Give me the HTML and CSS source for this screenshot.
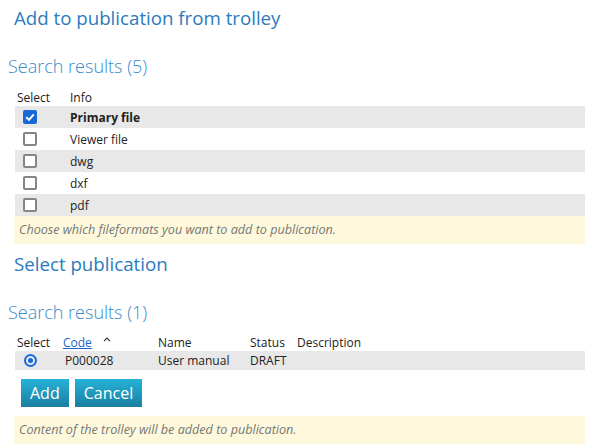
FILE: index.html
```html
<!DOCTYPE html>
<html lang="en">
<head>
  <meta charset="UTF-8">
  <title>Add to publication from trolley</title>
  <link rel="stylesheet" href="styles.css">
</head>
<body>

  <h1 class="page-title">Add to publication from trolley</h1>
  <h2 class="results-title">Search results (5)</h2>

  <div class="list files">
    <div class="row head">
      <div class="cell sel">Select</div>
      <div class="cell">Info</div>
    </div>
    <div class="row alt">
      <div class="cell sel"><span class="check on"><svg viewBox="0 0 14 14" width="14" height="14"><path d="M3.2 7.2 L6 9.8 L10.8 4.4" fill="none" stroke="#fff" stroke-width="2"/></svg></span></div>
      <div class="cell info strong">Primary file</div>
    </div>
    <div class="row">
      <div class="cell sel"><span class="check"></span></div>
      <div class="cell info">Viewer file</div>
    </div>
    <div class="row alt">
      <div class="cell sel"><span class="check"></span></div>
      <div class="cell info">dwg</div>
    </div>
    <div class="row">
      <div class="cell sel"><span class="check"></span></div>
      <div class="cell info">dxf</div>
    </div>
    <div class="row alt">
      <div class="cell sel"><span class="check"></span></div>
      <div class="cell info">pdf</div>
    </div>
  </div>
  <div class="hint">Choose which fileformats you want to add to publication.</div>

  <h1 class="page-title second">Select publication</h1>
  <h2 class="results-title">Search results (1)</h2>

  <div class="list pubs">
    <div class="row head">
      <div class="cell sel">Select</div>
      <div class="cell code"><a href="#">Code</a><svg class="caret" viewBox="0 0 8 5" width="8" height="5"><path d="M1 4.2 L4 1.2 L7 4.2" fill="none" stroke="#333" stroke-width="1.2"/></svg></div>
      <div class="cell name">Name</div>
      <div class="cell status">Status</div>
      <div class="cell">Description</div>
    </div>
    <div class="row alt">
      <div class="cell sel"><span class="radio"></span></div>
      <div class="cell code data">P000028</div>
      <div class="cell name">User manual</div>
      <div class="cell status">DRAFT</div>
      <div class="cell"></div>
    </div>
  </div>

  <div class="actions">
    <button class="btn">Add</button>
    <button class="btn">Cancel</button>
  </div>
  <div class="hint">Content of the trolley will be added to publication.</div>

</body>
</html>
```
FILE: styles.css
```css
body {
  margin: 0;
  padding: 0 6px 0 14px;
  font-family: "Open Sans", "Noto Sans", Arial, sans-serif;
  font-size: 12px;
  color: #222;
  background: #fff;
}

.page-title {
  margin: 0;
  padding-top: 5px;
  font-size: 18.7px;
  line-height: 26px;
  font-weight: 400;
  color: #2b7bbd;
}

.page-title.second {
  padding-top: 7px;
}

.results-title {
  margin: 22px 0 9px -6px;
  font-size: 18px;
  line-height: 26px;
  font-weight: 300;
  color: #3a8cc9;
}

.list {
  margin-left: 1px;
}

.row {
  display: flex;
  align-items: center;
  height: 22px;
}

.row.head {
  height: 18px;
  align-items: flex-end;
  padding-left: 2px;
}

.row.alt {
  background: #e8e8e8;
}

.cell {
  white-space: nowrap;
}

.files .sel {
  width: 53px;
}

.files .row:not(.head) .sel {
  padding-left: 8px;
  width: 47px;
}

.info.strong {
  font-weight: 700;
}

.check {
  display: block;
  width: 14px;
  height: 14px;
  box-sizing: border-box;
  border: 2px solid #858585;
  border-radius: 2px;
  background: #fff;
}

.check.on {
  border: none;
  background: #1769d8;
}

.check svg {
  display: block;
}

.pubs .row {
  height: 19px;
}

.pubs .row.head {
  height: 17px;
}

.pubs .sel {
  width: 46px;
}

.pubs .row:not(.head) .sel {
  padding-left: 9px;
  width: 39px;
}

.pubs .code {
  width: 95px;
}

.pubs .code.data {
  width: 93px;
  padding-left: 2px;
}

.pubs .name {
  width: 92px;
}

.pubs .status {
  width: 47px;
}

.code a {
  color: #1a66cc;
}

.caret {
  margin: 0 0 5px 11px;
}

.radio {
  display: block;
  width: 13px;
  height: 13px;
  box-sizing: border-box;
  border: 2px solid #1769d8;
  border-radius: 50%;
  position: relative;
}

.radio::after {
  content: "";
  position: absolute;
  left: 2px;
  top: 2px;
  width: 5px;
  height: 5px;
  border-radius: 50%;
  background: #1769d8;
}

.actions {
  display: flex;
  gap: 6px;
  margin: 9px 0 0 7px;
}

.btn {
  height: 28px;
  padding: 0 9px;
  border: none;
  font-family: inherit;
  font-size: 16px;
  color: #fff;
  background: linear-gradient(#27b1da, #1a7fa0);
}

.hint {
  height: 28px;
  line-height: 28px;
  padding-left: 5px;
  background: #fef9dc;
  color: #777;
  font-size: 12.6px;
  font-style: italic;
}

.actions + .hint {
  margin-top: 9px;
}
```
